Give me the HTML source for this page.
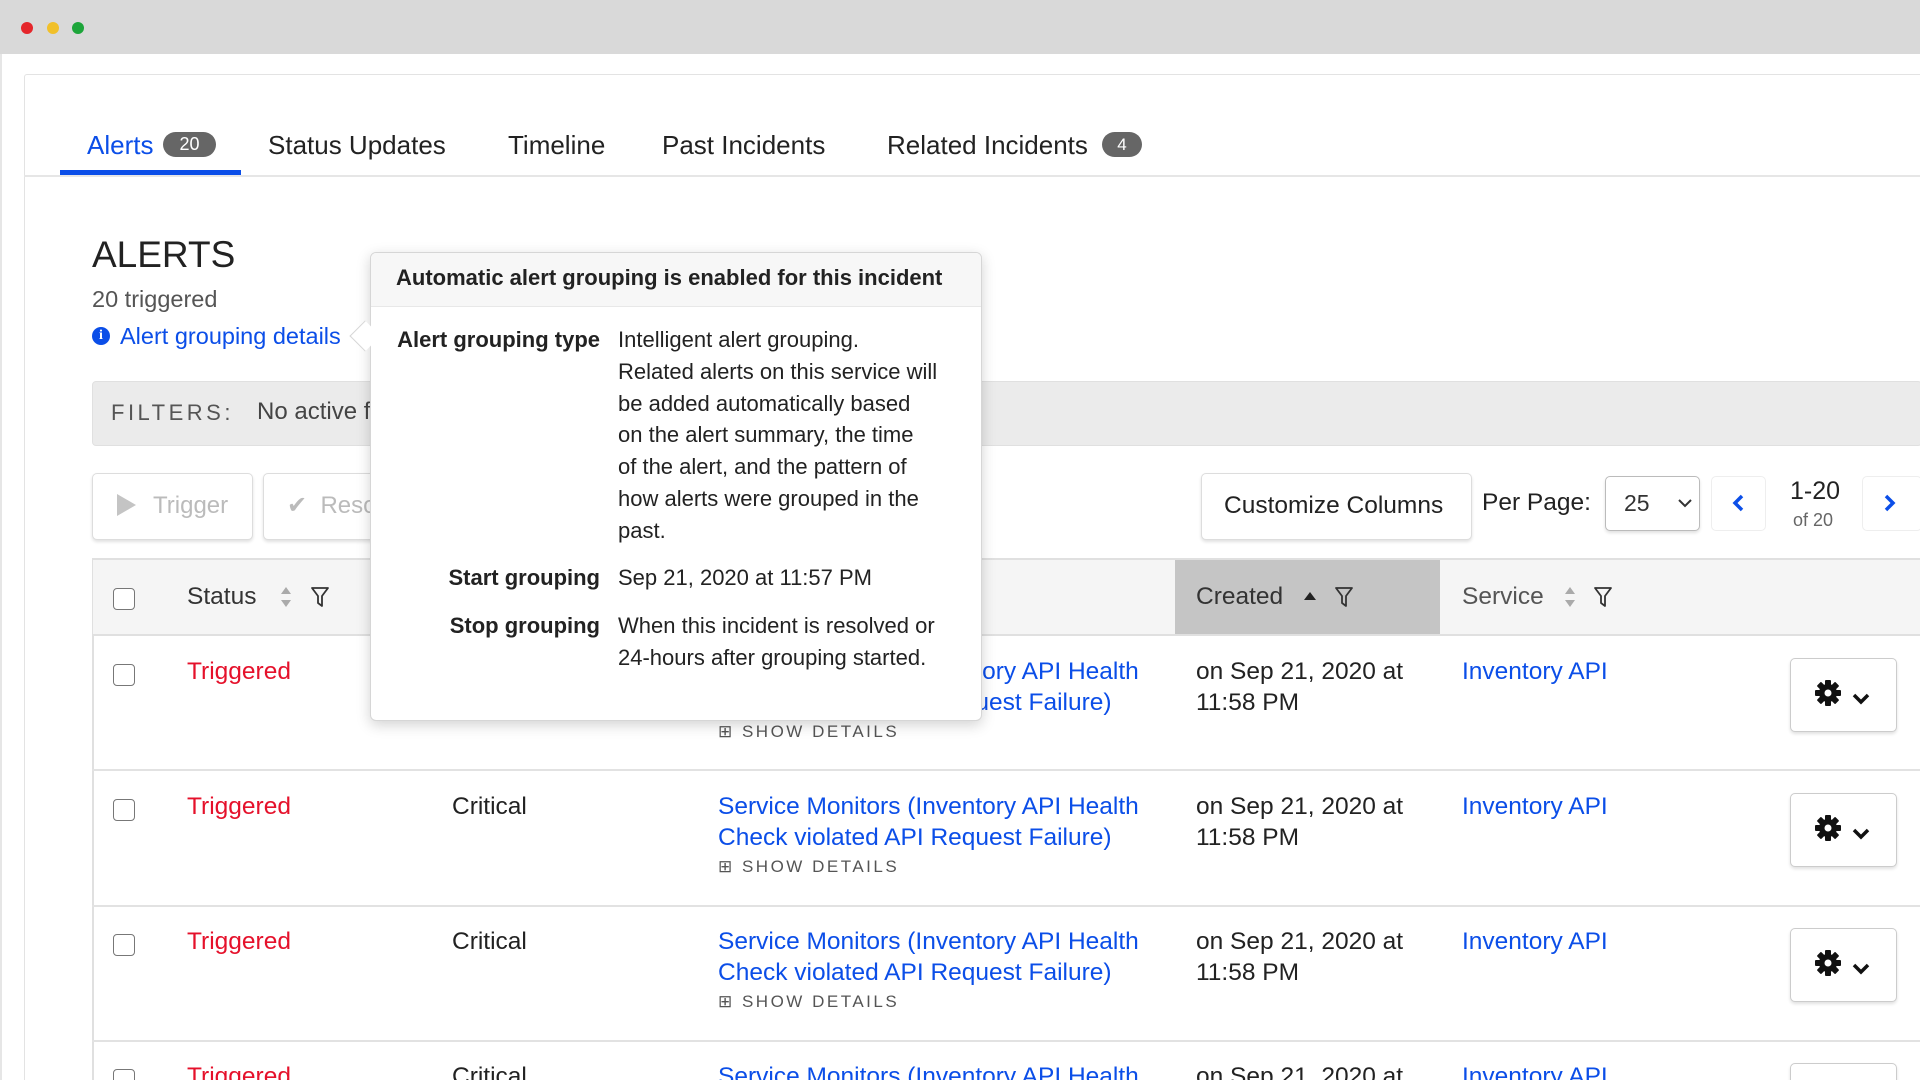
<!DOCTYPE html>
<html><head><meta charset="utf-8"><style>
*{margin:0;padding:0;box-sizing:border-box}
html,body{width:1920px;height:1080px;overflow:hidden}
body{background:#fff;font-family:"Liberation Sans",sans-serif;color:#222;position:relative}
#w{position:relative;width:1920px;height:1080px;overflow:hidden}
.a{position:absolute;white-space:nowrap}
.blue{color:#0b4ee8}
.red{color:#e5112b}
.cb{position:absolute;width:22px;height:22px;border:1.5px solid #777;border-radius:4px;background:#fff}
.btn{position:absolute;border:1.5px solid #ddd;border-radius:5px;background:#fff;box-shadow:0 2px 3px rgba(0,0,0,.12)}
.t24{font-size:24.5px;line-height:31px}
.sd{font-size:17px;letter-spacing:2.5px;color:#555}
.hl{position:absolute;left:92px;right:0;height:2px;background:#e2e2e2}
.tab{font-size:26px;line-height:34px}
.pv{font-size:22px}
</style></head><body><div id="w">
<svg width="0" height="0" style="position:absolute"><defs><g id="gear"><g fill="#111"><circle cx="14" cy="14" r="9"/><rect x="11" y="1" width="6" height="26" rx="1"/><rect x="11" y="1" width="6" height="26" rx="1" transform="rotate(45 14 14)"/><rect x="11" y="1" width="6" height="26" rx="1" transform="rotate(90 14 14)"/><rect x="11" y="1" width="6" height="26" rx="1" transform="rotate(135 14 14)"/></g><circle cx="14" cy="14" r="3.5" fill="#fff"/></g></defs></svg>
<!-- title bar -->
<div class="a" style="left:0;top:0;width:1920px;height:54px;background:#d9d9d9"></div>
<div class="a" style="left:21px;top:22px;width:12px;height:12px;border-radius:50%;background:#e5262b"></div>
<div class="a" style="left:47px;top:22px;width:12px;height:12px;border-radius:50%;background:#f1c02a"></div>
<div class="a" style="left:72px;top:22px;width:12px;height:12px;border-radius:50%;background:#1da53a"></div>
<div class="a" style="left:0;top:54px;width:2px;height:1026px;background:#e6e6e6"></div>
<!-- card -->
<div class="a" style="left:24px;top:74px;width:1900px;height:1100px;border:1.5px solid #e3e3e3;border-radius:3px"></div>
<!-- tabs -->
<div class="a" style="left:24px;top:175px;width:1896px;height:2px;background:#e6e6e6"></div>
<div class="a" style="left:60px;top:170px;width:181px;height:5px;background:#0b4ee8"></div>
<div class="a blue tab" style="left:87px;top:128px">Alerts</div>
<div class="a" style="left:163px;top:132px;width:53px;height:25px;border-radius:13px;background:#666;color:#fff;font-size:18px;line-height:25px;text-align:center">20</div>
<div class="a tab" style="left:268px;top:128px">Status Updates</div>
<div class="a tab" style="left:508px;top:128px">Timeline</div>
<div class="a tab" style="left:662px;top:128px">Past Incidents</div>
<div class="a tab" style="left:887px;top:128px">Related Incidents</div>
<div class="a" style="left:1102px;top:132px;width:40px;height:25px;border-radius:13px;background:#666;color:#fff;font-size:17px;line-height:25px;text-align:center">4</div>
<!-- heading -->
<div class="a" style="left:92px;top:233px;font-size:37px;line-height:44px;color:#222">ALERTS</div>
<div class="a" style="left:92px;top:284px;font-size:23.5px;line-height:30px;color:#555">20 triggered</div>
<div class="a" style="left:92px;top:327px;width:18px;height:18px;border-radius:50%;background:#0b4ee8;color:#fff;font:bold 14px/18px 'Liberation Serif',serif;text-align:center">i</div>
<div class="a blue" style="left:120px;top:321px;font-size:23.5px;line-height:30px">Alert grouping details</div>
<!-- filters -->
<div class="a" style="left:92px;top:381px;width:1830px;height:65px;background:#ebebeb;border:1.5px solid #e0e0e0;border-radius:4px"></div>
<div class="a" style="left:111px;top:398px;font-size:22px;line-height:30px;letter-spacing:3.5px;color:#555">FILTERS:</div>
<div class="a" style="left:257px;top:397px;font-size:24px;line-height:30px;color:#444">No active filters</div>
<!-- buttons -->
<div class="btn" style="left:92px;top:473px;width:161px;height:67px"></div>
<div class="a" style="left:117px;top:494px;width:0;height:0;border-left:19px solid #c4c4c4;border-top:11px solid transparent;border-bottom:11px solid transparent"></div>
<div class="a" style="left:153px;top:490px;font-size:24px;line-height:32px;color:#bbb">Trigger</div>
<div class="btn" style="left:263px;top:473px;width:160px;height:67px"></div>
<div class="a" style="left:287px;top:490px;font-size:24px;line-height:32px;color:#bbb">✔&nbsp; Resolve</div>
<div class="btn" style="left:1201px;top:473px;width:271px;height:67px"></div>
<div class="a" style="left:1224px;top:490px;font-size:24.5px;line-height:32px">Customize Columns</div>
<div class="a" style="left:1482px;top:487px;font-size:24.5px;line-height:32px">Per Page:</div>
<div class="btn" style="left:1605px;top:476px;width:95px;height:55px;border-color:#bbb"></div>
<div class="a" style="left:1624px;top:487px;font-size:23px;line-height:32px;color:#333">25</div>
<svg class="a" style="left:1677px;top:497px" width="16" height="12"><path d="M2 3l6 6 6-6" fill="none" stroke="#333" stroke-width="2"/></svg>
<div class="btn" style="left:1711px;top:476px;width:55px;height:55px;border-color:#eee;box-shadow:none"></div>
<svg class="a" style="left:1731px;top:493px" width="14" height="20"><path d="M11 3L4 10l7 7" fill="none" stroke="#0b4ee8" stroke-width="3.5"/></svg>
<div class="a" style="left:1790px;top:475px;font-size:25px;line-height:32px">1-20</div>
<div class="a" style="left:1793px;top:509px;font-size:18px;line-height:22px;color:#666">of 20</div>
<div class="btn" style="left:1862px;top:476px;width:60px;height:55px;border-color:#eee;box-shadow:none"></div>
<svg class="a" style="left:1883px;top:493px" width="14" height="20"><path d="M3 3l7 7-7 7" fill="none" stroke="#0b4ee8" stroke-width="3.5"/></svg>
<!-- table -->
<div class="a" style="left:92px;top:558px;width:1830px;height:78px;background:#f5f5f5;border-top:2px solid #e0e0e0;border-bottom:2px solid #e0e0e0;border-left:1.5px solid #e0e0e0"></div>
<div class="a" style="left:1175px;top:560px;width:265px;height:74px;background:#c5c5c5"></div>
<div class="a" style="left:92px;top:636px;width:1.5px;height:444px;background:#e0e0e0"></div>
<div class="cb" style="left:113px;top:588px"></div>
<div class="a" style="left:187px;top:581px;font-size:24.5px;line-height:32px;color:#333">Status</div>
<svg class="a" style="left:279px;top:586px" width="14" height="22"><path d="M7 1l5 7H2zM7 21l5-7H2z" fill="#aaa"/></svg>
<svg class="a" style="left:310px;top:586px" width="20" height="22"><path d="M2 2h16l-6 8v10l-4-3v-7z" fill="none" stroke="#333" stroke-width="1.8" stroke-linejoin="round"/></svg>
<div class="a" style="left:1196px;top:581px;font-size:24.5px;line-height:32px;color:#333">Created</div>
<svg class="a" style="left:1303px;top:591px" width="14" height="10"><path d="M7 1l6 8H1z" fill="#222"/></svg>
<svg class="a" style="left:1334px;top:586px" width="20" height="22"><path d="M2 2h16l-6 8v10l-4-3v-7z" fill="none" stroke="#333" stroke-width="1.8" stroke-linejoin="round"/></svg>
<div class="a" style="left:1462px;top:581px;font-size:24.5px;line-height:32px;color:#555">Service</div>
<svg class="a" style="left:1563px;top:586px" width="14" height="22"><path d="M7 1l5 7H2zM7 21l5-7H2z" fill="#aaa"/></svg>
<svg class="a" style="left:1593px;top:586px" width="20" height="22"><path d="M2 2h16l-6 8v10l-4-3v-7z" fill="none" stroke="#333" stroke-width="1.8" stroke-linejoin="round"/></svg>

<!-- rows -->
<div class="hl" style="top:769px"></div>
<div class="hl" style="top:905px"></div>
<div class="hl" style="top:1040px"></div>

<div class="cb" style="left:113px;top:664px"></div>
<div class="a red t24" style="left:187px;top:656px">Triggered</div>
<div class="a t24 blue" style="left:718px;top:656px">Service Monitors (Inventory API Health<br>Check violated API Request Failure)</div>
<div class="a sd" style="left:718px;top:722px">⊞ SHOW DETAILS</div>
<div class="a t24" style="left:1196px;top:656px">on Sep 21, 2020 at<br>11:58 PM</div>
<div class="a t24 blue" style="left:1462px;top:656px">Inventory API</div>
<div class="btn" style="left:1790px;top:658px;width:107px;height:74px;border-color:#ccc"></div>
<svg class="a" style="left:1814px;top:679px" width="28" height="28"><use href="#gear"/></svg>
<svg class="a" style="left:1852px;top:692px" width="18" height="14"><path d="M2 3l7 7 7-7" fill="none" stroke="#111" stroke-width="3.5"/></svg>

<div class="cb" style="left:113px;top:799px"></div>
<div class="a red t24" style="left:187px;top:791px">Triggered</div>
<div class="a t24" style="left:452px;top:791px">Critical</div>
<div class="a t24 blue" style="left:718px;top:791px">Service Monitors (Inventory API Health<br>Check violated API Request Failure)</div>
<div class="a sd" style="left:718px;top:857px">⊞ SHOW DETAILS</div>
<div class="a t24" style="left:1196px;top:791px">on Sep 21, 2020 at<br>11:58 PM</div>
<div class="a t24 blue" style="left:1462px;top:791px">Inventory API</div>
<div class="btn" style="left:1790px;top:793px;width:107px;height:74px;border-color:#ccc"></div>
<svg class="a" style="left:1814px;top:814px" width="28" height="28"><use href="#gear"/></svg>
<svg class="a" style="left:1852px;top:827px" width="18" height="14"><path d="M2 3l7 7 7-7" fill="none" stroke="#111" stroke-width="3.5"/></svg>

<div class="cb" style="left:113px;top:934px"></div>
<div class="a red t24" style="left:187px;top:926px">Triggered</div>
<div class="a t24" style="left:452px;top:926px">Critical</div>
<div class="a t24 blue" style="left:718px;top:926px">Service Monitors (Inventory API Health<br>Check violated API Request Failure)</div>
<div class="a sd" style="left:718px;top:992px">⊞ SHOW DETAILS</div>
<div class="a t24" style="left:1196px;top:926px">on Sep 21, 2020 at<br>11:58 PM</div>
<div class="a t24 blue" style="left:1462px;top:926px">Inventory API</div>
<div class="btn" style="left:1790px;top:928px;width:107px;height:74px;border-color:#ccc"></div>
<svg class="a" style="left:1814px;top:949px" width="28" height="28"><use href="#gear"/></svg>
<svg class="a" style="left:1852px;top:962px" width="18" height="14"><path d="M2 3l7 7 7-7" fill="none" stroke="#111" stroke-width="3.5"/></svg>

<div class="cb" style="left:113px;top:1069px"></div>
<div class="a red t24" style="left:187px;top:1061px">Triggered</div>
<div class="a t24" style="left:452px;top:1061px">Critical</div>
<div class="a t24 blue" style="left:718px;top:1061px">Service Monitors (Inventory API Health</div>
<div class="a t24" style="left:1196px;top:1061px">on Sep 21, 2020 at</div>
<div class="a t24 blue" style="left:1462px;top:1061px">Inventory API</div>
<div class="btn" style="left:1790px;top:1063px;width:107px;height:74px;border-color:#ccc"></div>

<!-- popover -->
<div class="a" style="left:370px;top:252px;width:612px;height:469px;background:#fff;border:1.5px solid #d6d6d6;border-radius:6px;box-shadow:0 4px 14px rgba(0,0,0,.18);overflow:hidden">
  <div style="height:54px;background:#f7f7f7;border-bottom:1px solid #e8e8e8"></div>
</div>
<div class="a" style="left:354px;top:325px;width:22px;height:22px;background:#fff;border-left:1.5px solid #d6d6d6;border-bottom:1.5px solid #d6d6d6;transform:rotate(45deg)"></div>
<div class="a pv" style="left:396px;top:263px;line-height:30px;font-weight:bold;color:#222">Automatic alert grouping is enabled for this incident</div>
<div class="a pv" style="left:300px;width:300px;top:324px;text-align:right;line-height:32px;font-weight:bold">Alert grouping type</div>
<div class="a pv" style="left:618px;top:324px;line-height:31.8px">Intelligent alert grouping.<br>Related alerts on this service will<br>be added automatically based<br>on the alert summary, the time<br>of the alert, and the pattern of<br>how alerts were grouped in the<br>past.</div>
<div class="a pv" style="left:300px;width:300px;top:562px;text-align:right;line-height:32px;font-weight:bold">Start grouping</div>
<div class="a pv" style="left:618px;top:562px;line-height:32px">Sep 21, 2020 at 11:57 PM</div>
<div class="a pv" style="left:300px;width:300px;top:610px;text-align:right;line-height:32px;font-weight:bold">Stop grouping</div>
<div class="a pv" style="left:618px;top:610px;line-height:32px">When this incident is resolved or<br>24-hours after grouping started.</div>
</div></body></html>
